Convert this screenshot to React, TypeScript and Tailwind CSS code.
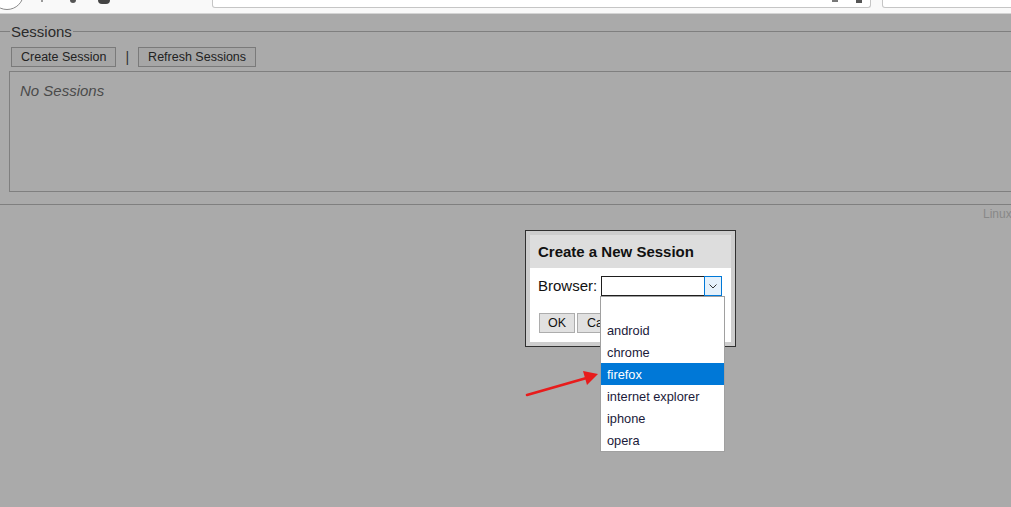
const items = ["", "android", "chrome", "firefox", "internet explorer", "iphone", "opera"];

const App = () => {
  return (
    <div className="w-[1011px] h-[507px] overflow-hidden flex flex-col bg-[#aaaaaa] font-['Liberation_Sans',Arial,sans-serif]">
      {/* browser chrome strip */}
      <div className="relative h-[14px] shrink-0 bg-[#f9f9f9] border-b border-[#d4d4d4] flex items-start overflow-hidden">
        <div className="-ml-[10px] -mt-[24px] w-[34px] h-[34px] rounded-full border border-[#8a8a8a] bg-white shrink-0" />
        <div className="ml-[17px] w-[2px] h-[2px] bg-[#999] shrink-0" />
        <div className="ml-[27px] w-[6px] h-[3px] rounded-b-full bg-[#555] shrink-0" />
        <div className="ml-[22px] w-[12px] h-[4px] rounded-b-[4px] bg-[#444] shrink-0" />
        <div className="ml-[102px] h-[8px] w-[659px] bg-white border border-t-0 border-[#c5c5c5] rounded-b-[3px] shrink-0 flex justify-end items-start pr-[8px] gap-[18px]">
          <div className="w-[6px] h-[2px] bg-[#777]" />
          <div className="w-[6px] h-[3px] bg-[#555]" />
        </div>
        <div className="ml-[11px] h-[8px] w-[140px] bg-white border border-t-0 border-[#c5c5c5] rounded-b-[3px] shrink-0" />
      </div>

      {/* page */}
      <div className="relative flex-1">
        <fieldset className="mt-[9px] w-[1040px] border-y border-x-0 border-[#7f7f7f] pb-[12px]">
          <legend className="ml-[10px] px-[1px] text-[15px] leading-[17px] text-[#2b2b2b]">Sessions</legend>
          <div className="flex items-center mt-[7px] ml-[11px] text-[12.5px] text-[#222]">
            <button className="h-[20px] px-[9px] border border-[#7a7a7a] bg-[#a6a6a6] leading-[18px]">Create Session</button>
            <span className="mx-[9px] text-[#333] text-[14px] leading-[18px]">|</span>
            <button className="h-[20px] px-[9px] border border-[#7a7a7a] bg-[#a6a6a6] leading-[18px]">Refresh Sessions</button>
          </div>
          <div className="mt-[4px] ml-[9px] h-[121px] border border-[#7f7f7f] px-[10px] pt-[10px]">
            <div className="italic text-[15px] leading-[17px] text-[#4a4a4a]">No Sessions</div>
          </div>
        </fieldset>
        <div className="pl-[983px] mt-[2px] text-[12px] leading-[14px] text-[#888] whitespace-nowrap">Linux</div>

        {/* modal */}
        <div className="absolute left-[525px] top-[216px] w-[211px] h-[117px] border border-[#303030] bg-[#cdcdcd] p-[4px]">
          <div className="h-[33px] bg-[#dddddd] flex items-center px-[8px] pt-[1px]">
            <span className="font-bold text-[15px] text-[#111]">Create a New Session</span>
          </div>
          <div className="h-[74px] bg-white px-[8px] pt-[8px]">
            <div className="flex items-center">
              <span className="text-[15px] text-[#111] leading-[20px]">Browser:</span>
              <div className="ml-[4px] w-[121px] h-[20px] border border-[#1e1e1e] flex justify-end">
                <div className="-mt-px -mr-px w-[18px] h-[20px] border border-[#0078d7] bg-[#e5f1fb] flex items-center justify-center">
                  <svg width="8" height="5" viewBox="0 0 8 5" fill="none">
                    <path d="M0.5 0.5L4 4L7.5 0.5" stroke="#333" strokeWidth="1" />
                  </svg>
                </div>
              </div>
            </div>
            <div className="flex mt-[17px] ml-[1px] gap-[2px] text-[12.5px] text-[#111]">
              <button className="w-[36px] h-[20px] bg-[#e1e1e1] border border-[#adadad]">OK</button>
              <button className="w-[60px] h-[20px] bg-[#e1e1e1] border border-[#adadad] text-left pl-[9px]">Cancel</button>
            </div>
          </div>
        </div>

        {/* open dropdown list */}
        <div className="absolute left-[600px] top-[282px] w-[125px] border border-[#a0a0a0] bg-white flex flex-col">
          {items.map((it) => (
            <div
              key={it || "blank"}
              className={
                it === "firefox"
                  ? "h-[22px] pl-[6px] pt-[1px] flex items-center text-[12.8px] bg-[#0078d7] text-white"
                  : "h-[22px] pl-[6px] pt-[1px] flex items-center text-[12.8px] text-[#1a1a3a]"
              }
            >
              {it}
            </div>
          ))}
        </div>

        {/* annotation arrow */}
        <svg className="absolute left-[520px] top-[352px]" width="84" height="40" viewBox="0 0 84 40">
          <line x1="7" y1="29" x2="70" y2="11" stroke="#e81c1c" strokeWidth="2.6" strokeLinecap="round" />
          <polygon points="78,8 63,5 67,19" fill="#e81c1c" />
        </svg>
      </div>
    </div>
  );
};

export default App;
